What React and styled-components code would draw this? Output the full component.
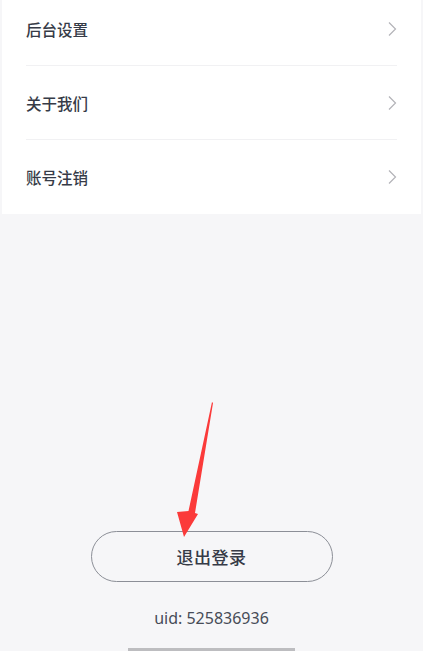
import React from "react";
import styled, { createGlobalStyle } from "styled-components";

const GlobalStyle = createGlobalStyle`
  html, body {
    margin: 0;
    padding: 0;
    background: #f6f6f8;
  }
  body {
    font-family: "Noto Sans CJK SC", "Noto Sans", sans-serif;
    color: #363b47;
  }
  * { box-sizing: border-box; }
`;

const Page = styled.div`
  position: relative;
  height: 651px;
  overflow: hidden;
  display: flex;
  flex-direction: column;
  background: #f6f6f8;
`;

const Card = styled.ul`
  list-style: none;
  margin: -8px 2px 0;
  padding: 0;
  background: #ffffff;
`;

const Row = styled.li`
  height: 74px;
  margin: 0 24px;
  padding: 0 0 0 0;
  display: flex;
  align-items: center;
  justify-content: space-between;
  font-size: 15.5px;
  font-weight: 500;
  color: #363b47;
  border-bottom: ${(p) => (p.$last ? "none" : "1px solid #f1f1f3")};
`;

const Spacer = styled.div`
  flex: 1;
`;

const Footer = styled.div`
  display: flex;
  flex-direction: column;
  align-items: center;
`;

const LogoutButton = styled.button`
  width: 242px;
  height: 51px;
  border: 1.5px solid #8c8f97;
  border-radius: 26px;
  background: transparent;
  font-family: inherit;
  font-size: 17px;
  font-weight: 500;
  color: #363b47;
  letter-spacing: 0.5px;
`;

const Uid = styled.div`
  margin-top: 21px;
  height: 30px;
  line-height: 30px;
  font-size: 16px;
  color: #474c57;
  font-family: "Noto Sans", "Noto Sans CJK SC", sans-serif;
`;

const HomeBar = styled.div`
  margin-top: 15px;
  width: 167px;
  height: 3px;
  background: #bdbdc0;
`;

const Annotation = styled.svg`
  position: absolute;
  left: 170px;
  top: 398px;
  pointer-events: none;
`;

const Chevron = () => (
  <svg width="10" height="16" viewBox="0 0 10 16">
    <path d="M2 1.5 L8.5 8 L2 14.5" fill="none" stroke="#b3b3b8" strokeWidth="1.2" />
  </svg>
);

const items = ["后台设置", "关于我们", "账号注销"];

export default function App() {
  return (
    <>
      <GlobalStyle />
      <Page>
        <Card>
          {items.map((t, i) => (
            <Row key={t} $last={i === items.length - 1}>
              <span>{t}</span>
              <Chevron />
            </Row>
          ))}
        </Card>
        <Spacer />
        <Footer>
          <LogoutButton>退出登录</LogoutButton>
          <Uid>uid: 525836936</Uid>
          <HomeBar />
        </Footer>
        <Annotation width="50" height="145" viewBox="0 0 50 145">
          <path
            d="M42 4 L43 5 L25 115 L28 116 L14 139 L7 114 L18.5 113 Z"
            fill="#fb3a3a"
          />
        </Annotation>
      </Page>
    </>
  );
}
